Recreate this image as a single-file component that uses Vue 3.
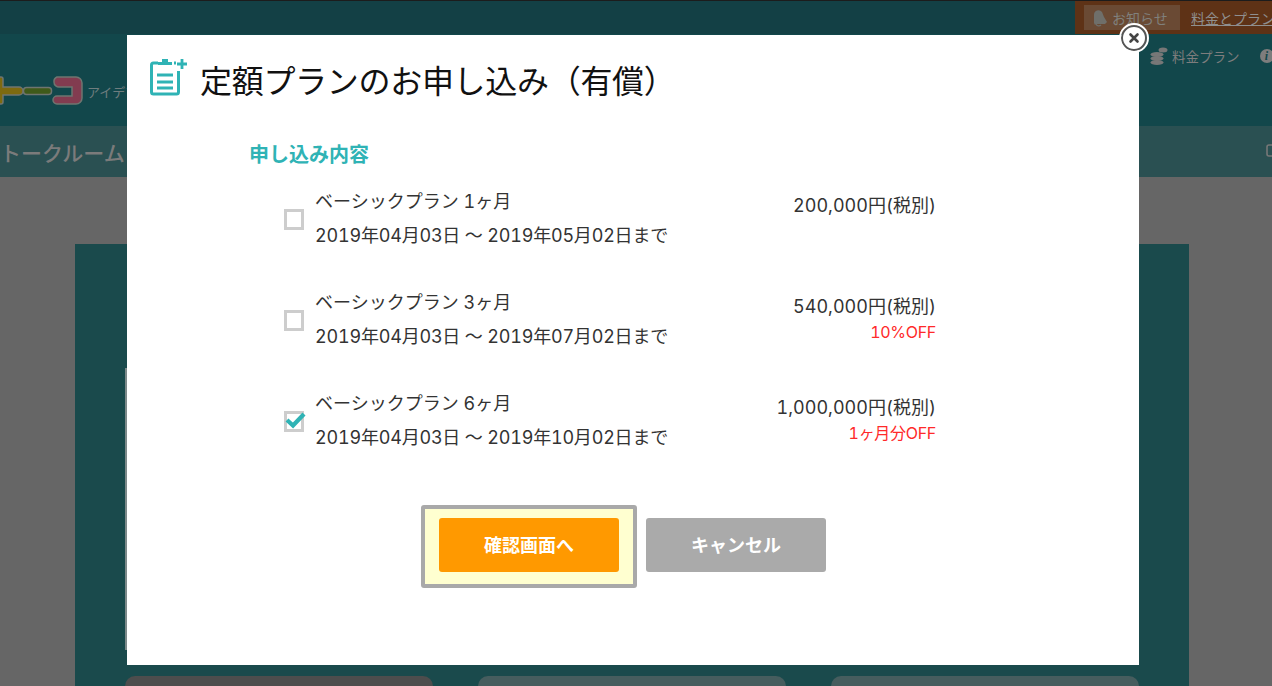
<template>
  <div class="page">
    <header class="top-strip">
      <div class="notice-area">
        <span class="notice-btn">
          <svg class="bell" width="15" height="18" viewBox="0 0 15 18"><path d="M1 14V6a4.500 4.500 0 0 1 8-3l2 5 3 5-2 2H3l-1 1z" fill="#6f6f6a"/><path d="M3 15a3 3 0 0 0 5 1" fill="none" stroke="#6f6f6a" stroke-width="1.200"/></svg>
          お知らせ
        </span>
        <a class="plan-link">料金とプラン</a>
      </div>
    </header>
    <div class="logo-row">
      <div class="logo">
        <svg class="logo-mark" width="84" height="30" viewBox="0 0 84 30" stroke="#6f7570" stroke-width="1.500">
          <path d="M-4 1h5a2 2 0 0 1 2 2v8h16a3.500 3.500 0 0 1 0 8H3v7a2 2 0 0 1-2 2h-5z" fill="#7d6a10"/>
          <rect x="23.500" y="11.500" width="28" height="7" rx="3" fill="#3f5a1a"/>
          <path d="M57 1h19a6 6 0 0 1 6 6v15a6 6 0 0 1-6 6H57a3.500 3.500 0 0 1 0-8h15v-9H60a5 5 0 0 1-6-5 5 5 0 0 1 3-5z" fill="#823c50"/>
        </svg>
        <span class="logo-sub">アイデア</span>
      </div>
      <div class="logo-links">
        <svg class="coins" width="18" height="18" viewBox="0 0 18 18" fill="#777">
          <ellipse cx="7" cy="7.500" rx="6.500" ry="2.500"/>
          <ellipse cx="7" cy="11.500" rx="6.500" ry="2.500"/>
          <ellipse cx="7" cy="15.500" rx="6.500" ry="2.500"/>
          <ellipse cx="13" cy="3" rx="4.500" ry="2.500"/>
        </svg>
        <span class="price-link">料金プラン</span>
        <span class="info-dot">i</span>
      </div>
    </div>
    <nav class="nav-row">
      <span class="nav-title">トークルーム</span>
      <svg class="chat-icon" width="8" height="16" viewBox="0 0 8 16"><path d="M8 1H3a2 2 0 0 0-2 2v7a2 2 0 0 0 2 2h5" fill="none" stroke="#777" stroke-width="1.600"/></svg>
    </nav>
    <main class="content">
      <section class="teal-panel">
        <div class="inner-box"></div>
        <div class="card-row">
          <div class="card card-dark"></div>
          <div class="card"></div>
          <div class="card"></div>
        </div>
      </section>
    </main>

    <div class="modal">
      <button class="close-btn" aria-label="閉じる">
        <svg width="12" height="12" viewBox="0 0 12 12"><path d="M2.500 2.500l7 7M9.500 2.500l-7 7" stroke="#444" stroke-width="2.600" stroke-linecap="round"/></svg>
      </button>
      <div class="modal-title">
        <svg class="title-icon" width="38" height="38" viewBox="0 0 38 38" fill="none" stroke="#2fb3b5">
          <path d="M8 5H3.500a2 2 0 0 0-2 2v27a2 2 0 0 0 2 2h23a2 2 0 0 0 2-2V13" stroke-width="3"/>
          <path d="M8 7V4h4V1h6v3h4v3z" fill="#2fb3b5" stroke="none"/>
          <path d="M24 5h2" stroke-width="3"/>
          <path d="M7 17h16M7 24h16M7 30h16" stroke-width="3"/>
          <path d="M32 1v10M27 6h10" stroke-width="2.800"/>
        </svg>
        <h1>定額プランのお申し込み（有償）</h1>
      </div>
      <div class="form-body">
        <h2>申し込み内容</h2>
        <div v-for="plan in plans" :key="plan.name" class="plan">
          <span class="check" :class="{ on: plan.checked }">
            <svg v-if="plan.checked" width="22" height="20" viewBox="0 0 22 20"><path d="M3 9l6 5.500L20 3" fill="none" stroke="#2fb3b5" stroke-width="4.200"/></svg>
          </span>
          <div class="plan-text">
            <div class="plan-name">{{ plan.name }}</div>
            <div class="plan-term">{{ plan.term }}</div>
          </div>
          <div class="plan-price">
            <div>{{ plan.price }}</div>
            <div v-if="plan.off" class="off">{{ plan.off }}</div>
          </div>
        </div>
      </div>
      <div class="actions">
        <div class="focus-ring"><button class="btn btn-go">確認画面へ</button></div>
        <button class="btn btn-cancel">キャンセル</button>
      </div>
    </div>
  </div>
</template>

<script setup>
const plans = [
  { name: 'ベーシックプラン 1ヶ月', term: '2019年04月03日 ～ 2019年05月02日まで', price: '200,000円(税別)', off: '', checked: false },
  { name: 'ベーシックプラン 3ヶ月', term: '2019年04月03日 ～ 2019年07月02日まで', price: '540,000円(税別)', off: '10%OFF', checked: false },
  { name: 'ベーシックプラン 6ヶ月', term: '2019年04月03日 ～ 2019年10月02日まで', price: '1,000,000円(税別)', off: '1ヶ月分OFF', checked: true }
]
</script>

<style>
html, body {
  margin: 0;
  overflow: hidden;
  background: #666;
}
</style>

<style scoped>
.page {
  position: relative;
  width: 1272px;
  height: 686px;
  overflow: hidden;
  background: #666;
  font-family: "Noto Sans CJK JP", "Liberation Sans", sans-serif;
  color: #333;
}

.top-strip {
  height: 34px;
  background: #134045;
  border-top: 1px solid #1c1c1c;
  box-sizing: border-box;
  display: flex;
  justify-content: flex-end;
}

.notice-area {
  width: 197px;
  display: flex;
  align-items: center;
  gap: 11px;
  padding-left: 9px;
  box-sizing: border-box;
  background: #5e3216;
  white-space: nowrap;
  overflow: hidden;
  font-size: 14px;
}

.notice-btn {
  display: flex;
  align-items: center;
  gap: 4px;
  height: 25px;
  width: 96px;
  flex-shrink: 0;
  padding-left: 9px;
  box-sizing: border-box;
  background: #6a4a34;
  color: #80807c;
}

.plan-link {
  color: #8f8f8f;
  text-decoration: underline;
}

.logo-row {
  height: 92px;
  background: #12474b;
  display: flex;
  justify-content: space-between;
  align-items: flex-start;
}

.logo {
  display: flex;
  align-items: center;
  gap: 3px;
  margin-top: 42px;
}

.logo-mark {
  flex-shrink: 0;
}

.logo-sub {
  font-size: 13px;
  color: #6f7d7e;
  white-space: nowrap;
}

.logo-links {
  display: flex;
  align-items: center;
  gap: 4px;
  margin-top: 12px;
  width: 122px;
  flex-shrink: 0;
  white-space: nowrap;
  overflow: hidden;
}

.coins {
  flex-shrink: 0;
}

.price-link {
  font-size: 13.5px;
  color: #7d7d7d;
}

.info-dot {
  margin-left: 16px;
  width: 14px;
  height: 14px;
  border-radius: 50%;
  background: #7d7d7d;
  color: #12474b;
  font: italic bold 12px/14px "Liberation Serif", serif;
  text-align: center;
  flex-shrink: 0;
}

.nav-row {
  height: 51px;
  background: #2a5052;
  display: flex;
  align-items: center;
  justify-content: space-between;
}

.nav-title {
  font-size: 21px;
  font-weight: 500;
  color: #7b7b7b;
}

.chat-icon {
  margin-right: -2px;
}

.content {
  padding: 67px 83px 0 75px;
}

.teal-panel {
  height: 500px;
  background: #1a4a4c;
  box-sizing: border-box;
  padding: 124px 50px 0;
}

.inner-box {
  height: 282px;
  margin-bottom: 26px;
  background: #7d8a8a;
}

.card-row {
  display: flex;
  gap: 45px;
}

.card {
  flex: 1;
  height: 40px;
  background: #465d5e;
  border-radius: 10px 10px 0 0;
}

.card-dark {
  background: #4d4d4d;
}

/* modal */
.modal {
  position: absolute;
  left: 127px;
  top: 35px;
  width: 1012px;
  height: 630px;
  background: #fff;
  box-sizing: border-box;
  padding: 24px 0 0 23px;
}

.close-btn {
  position: absolute;
  right: -8px;
  top: -10px;
  width: 26px;
  height: 26px;
  padding: 0;
  box-sizing: border-box;
  border-radius: 50%;
  border: 2px solid #555;
  outline: 2px solid #fff;
  background: #fff;
  display: flex;
  align-items: center;
  justify-content: center;
}

.modal-title {
  display: flex;
  align-items: center;
  gap: 12px;
  height: 40px;
}

.title-icon {
  flex-shrink: 0;
  margin-top: -4px;
}

.modal-title h1 {
  margin: 0;
  font-size: 32px;
  font-weight: 400;
  letter-spacing: -0.3px;
  color: #111;
  white-space: nowrap;
  line-height: 40px;
}

.form-body {
  margin-top: 42px;
  margin-left: 99px;
  width: 687px;
  font-family: Inter, "Noto Sans CJK JP", sans-serif;
  font-feature-settings: "tnum";
}

.form-body h2 {
  margin: 0 0 20px;
  font-size: 20px;
  line-height: 28px;
  font-weight: 700;
  color: #2fb3b5;
}

.plan {
  display: flex;
  height: 101px;
  padding-left: 35px;
  font-size: 18px;
  line-height: 34px;
}

.check {
  width: 20px;
  height: 21px;
  margin-top: 20px;
  margin-right: 11px;
  box-sizing: border-box;
  border: 3px solid #cdcdcd;
  position: relative;
  flex-shrink: 0;
}

.check svg {
  position: absolute;
  left: -3px;
  top: -3px;
}

.plan-text {
  flex: 1;
  margin-top: -4px;
  white-space: nowrap;
}

.plan-term {
  letter-spacing: -0.2px;
}

.plan-price {
  text-align: right;
  white-space: nowrap;
  line-height: 26px;
  margin-top: 4px;
}

.off {
  margin-top: -1px;
  font-size: 16px;
  letter-spacing: -0.3px;
  line-height: 26px;
  color: #ff2a2a;
}

.actions {
  display: flex;
  align-items: flex-start;
  margin: 13px 0 0 271px;
  gap: 9px;
}

.focus-ring {
  padding: 9px 14px 12px;
  background: #ffffd0;
  border: 4px solid #a9a9a9;
  border-radius: 3px;
}

.btn {
  display: block;
  width: 180px;
  height: 54px;
  padding: 0 0 3px;
  border: none;
  border-radius: 3px;
  color: #fff;
  font-family: inherit;
  font-size: 18px;
  font-weight: 700;
}

.btn-go {
  background: #ff9900;
}

.btn-cancel {
  background: #aaa;
  margin-top: 13px;
}
</style>
